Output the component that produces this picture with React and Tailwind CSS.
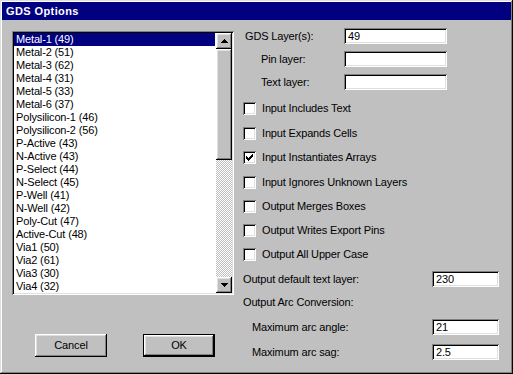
import React from "react";

const items = [
  "Metal-1 (49)", "Metal-2 (51)", "Metal-3 (62)", "Metal-4 (31)", "Metal-5 (33)",
  "Metal-6 (37)", "Polysilicon-1 (46)", "Polysilicon-2 (56)", "P-Active (43)",
  "N-Active (43)", "P-Select (44)", "N-Select (45)", "P-Well (41)", "N-Well (42)",
  "Poly-Cut (47)", "Active-Cut (48)", "Via1 (50)", "Via2 (61)", "Via3 (30)", "Via4 (32)",
];

const sunken =
  "shadow-[inset_1px_1px_#808080,inset_-1px_-1px_#ffffff,inset_2px_2px_#000000,inset_-2px_-2px_#dfdfdf]";
const raised =
  "shadow-[inset_-1px_-1px_#000000,inset_1px_1px_#ffffff,inset_-2px_-2px_#808080,inset_2px_2px_#dfdfdf]";

function Field({ value, w }) {
  return (
    <div className={`h-[16px] ${w} bg-white ${sunken} flex items-center pl-[4px] pt-[1px] leading-none`}>
      {value}
    </div>
  );
}

function Check() {
  const px = [
    [6, 0], [5, 1], [6, 1], [0, 2], [4, 2], [5, 2], [6, 2],
    [0, 3], [1, 3], [3, 3], [4, 3], [5, 3],
    [0, 4], [1, 4], [2, 4], [3, 4], [4, 4],
    [1, 5], [2, 5], [3, 5], [2, 6],
  ];
  return (
    <svg width="7" height="7" viewBox="0 0 7 7" shapeRendering="crispEdges">
      {px.map(([x, y], i) => (
        <rect key={i} x={x} y={y} width="1" height="1" fill="#000" />
      ))}
    </svg>
  );
}

function Checkbox({ label, checked, extra = "" }) {
  return (
    <div className={`h-[24px] flex items-center ${extra}`}>
      <div className={`w-[13px] h-[13px] bg-white ${sunken} flex items-center justify-center shrink-0`}>
        {checked && <Check />}
      </div>
      <span className="ml-[6px]">{label}</span>
    </div>
  );
}

function Arrow({ up }) {
  return (
    <svg width="7" height="4" viewBox="0 0 7 4" shapeRendering="crispEdges">
      {up ? (
        <>
          <rect x="3" y="0" width="1" height="1" fill="#000" />
          <rect x="2" y="1" width="3" height="1" fill="#000" />
          <rect x="1" y="2" width="5" height="1" fill="#000" />
          <rect x="0" y="3" width="7" height="1" fill="#000" />
        </>
      ) : (
        <>
          <rect x="0" y="0" width="7" height="1" fill="#000" />
          <rect x="1" y="1" width="5" height="1" fill="#000" />
          <rect x="2" y="2" width="3" height="1" fill="#000" />
          <rect x="3" y="3" width="1" height="1" fill="#000" />
        </>
      )}
    </svg>
  );
}

export default function App() {
  return (
    <div
      className="w-[513px] h-[374px] bg-[#c0c0c0] p-[2px] flex flex-col text-[11px] text-black shadow-[inset_-1px_-1px_#000000,inset_1px_1px_#dfdfdf,inset_-2px_-2px_#808080,inset_2px_2px_#ffffff]"
      style={{ fontFamily: '"Liberation Sans", Arial, sans-serif' }}
    >
      <div className="h-[18px] bg-[#000080] text-white font-bold tracking-[0.4px] pl-[4px] flex items-center text-[11px]">
        GDS Options
      </div>
      <div className="flex pt-[8px] pl-[10px] tracking-[-0.15px]">
        {/* left column */}
        <div className="w-[222px] flex flex-col">
          <div className={`mt-[3px] h-[264px] bg-white ${sunken} p-[2px] flex`}>
            <div className="flex-1 flex flex-col">
              {items.map((it, i) => (
                <div
                  key={it}
                  className={`h-[13px] leading-[13px] pl-[2px] whitespace-nowrap ${
                    i === 0 ? "bg-[#000080] text-white mr-[1px]" : ""
                  }`}
                >
                  {it}
                </div>
              ))}
            </div>
            <div className="w-[16px] flex flex-col">
              <div className={`h-[16px] bg-[#c0c0c0] ${raised} flex items-center justify-center`}>
                <Arrow up />
              </div>
              <div className={`h-[111px] bg-[#c0c0c0] ${raised}`} />
              <div className="flex-1 bg-[repeating-conic-gradient(#c0c0c0_0_25%,#ffffff_0_50%)] bg-[length:2px_2px]" />
              <div className={`h-[16px] bg-[#c0c0c0] ${raised} flex items-center justify-center`}>
                <Arrow />
              </div>
            </div>
          </div>
          <div className="flex mt-[39px] pl-[23px] gap-[36px]">
            <div className={`w-[72px] h-[23px] ${raised} flex items-center justify-center`}>Cancel</div>
            <div className="w-[72px] h-[23px] border border-black">
              <div className={`w-full h-full ${raised} flex items-center justify-center`}>OK</div>
            </div>
          </div>
        </div>
        {/* right column */}
        <div className="ml-[9px] flex flex-col w-[256px]">
          <div className="flex items-center h-[16px]">
            <span className="w-[101px] pl-[2px]">GDS Layer(s):</span>
            <Field value="49" w="w-[103px]" />
          </div>
          <div className="flex items-center h-[16px] mt-[7px]">
            <span className="w-[101px] pl-[18px]">Pin layer:</span>
            <Field value="" w="w-[103px]" />
          </div>
          <div className="flex items-center h-[16px] mt-[7px]">
            <span className="w-[101px] pl-[18px]">Text layer:</span>
            <Field value="" w="w-[103px]" />
          </div>
          <div className="mt-[6px] flex flex-col">
            <Checkbox label="Input Includes Text" />
            <Checkbox label="Input Expands Cells" extra="mt-[1px]" />
            <Checkbox label="Input Instantiates Arrays" checked />
            <Checkbox label="Input Ignores Unknown Layers" extra="mt-[1px]" />
            <Checkbox label="Output Merges Boxes" />
            <Checkbox label="Output Writes Export Pins" />
            <Checkbox label="Output All Upper Case" />
          </div>
          <div className="flex items-center h-[16px] mt-[5px]">
            <span className="w-[189px]">Output default text layer:</span>
            <Field value="230" w="w-[67px]" />
          </div>
          <div className="flex items-center h-[16px] mt-[7px]">Output Arc Conversion:</div>
          <div className="flex items-center h-[16px] mt-[9px]">
            <span className="w-[189px] pl-[9px]">Maximum arc angle:</span>
            <Field value="21" w="w-[67px]" />
          </div>
          <div className="flex items-center h-[16px] mt-[9px]">
            <span className="w-[189px] pl-[9px]">Maximum arc sag:</span>
            <Field value="2.5" w="w-[67px]" />
          </div>
        </div>
      </div>
    </div>
  );
}
